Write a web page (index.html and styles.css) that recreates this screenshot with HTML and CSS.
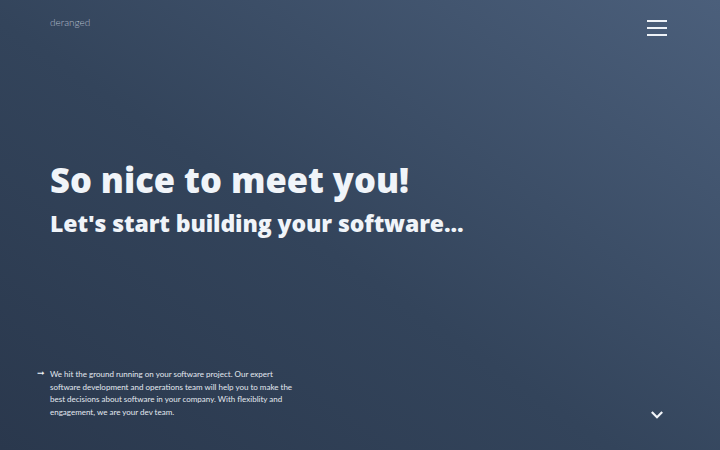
FILE: index.html
```html
<!DOCTYPE html>
<html lang="en">
<head>
<meta charset="utf-8">
<title>deranged</title>
<link rel="stylesheet" href="styles.css">
</head>
<body>
<div class="page">
  <header class="topbar">
    <div class="logo">deranged</div>
    <button class="menu" aria-label="Menu">
      <span class="bar"></span><span class="bar"></span><span class="bar"></span>
    </button>
  </header>
  <main class="hero">
    <h1 class="title">So nice to meet you!</h1>
    <h2 class="subtitle">Let's start building your software...</h2>
  </main>
  <footer class="bottom">
    <div class="intro">
      <span class="arrow">&#10142;</span>
      <p class="text">We hit the ground running on your software project. Our expert software development and operations team will help you to make the best decisions about software in your company. With flexiblity and engagement, we are your dev team.</p>
    </div>
    <svg class="chevron" width="14" height="10" viewBox="0 0 14 10"><path d="M1.8 2 L7 7.2 L12.2 2" fill="none" stroke="#f2f5f9" stroke-width="2.2"/></svg>
  </footer>
</div>
</body>
</html>
```
FILE: styles.css
```css
html, body { margin: 0; padding: 0; }
body {
  font-family: "Lato", "Noto Sans", sans-serif;
  color: #eef2f7;
}
.page {
  width: 720px;
  height: 450px;
  box-sizing: border-box;
  background: linear-gradient(35deg, #2a384d 0%, #33445b 45%, #4b5f7b 100%);
  display: flex;
  flex-direction: column;
  padding: 0 53px 0 50px;
  overflow: hidden;
}
.topbar {
  display: flex;
  justify-content: space-between;
  align-items: flex-start;
  padding-top: 15px;
  height: 60px;
  box-sizing: border-box;
}
.logo {
  font-size: 10px;
  font-weight: 300;
  color: #b3bdca;
  line-height: 14px;
}
.menu {
  background: none;
  border: 0;
  padding: 0;
  margin-top: 5px;
  width: 20px;
  display: flex;
  flex-direction: column;
  gap: 5px;
  cursor: pointer;
}
.bar {
  display: block;
  width: 20px;
  height: 2px;
  background: #eef2f7;
}
.hero {
  padding-top: 99px;
  flex: 1;
  font-family: "Open Sans", "Noto Sans", sans-serif;
  color: #f0f4f9;
}
.title {
  margin: 0;
  font-size: 34.5px;
  font-weight: 800;
  line-height: 42px;
  letter-spacing: 0;
}
.subtitle {
  margin: 6px 0 0;
  font-size: 23px;
  font-weight: 800;
  line-height: 32px;
  letter-spacing: -0.1px;
}
.bottom {
  display: flex;
  justify-content: space-between;
  align-items: flex-end;
  padding-bottom: 30px;
}
.intro {
  position: relative;
  width: 246px;
}
.arrow {
  position: absolute;
  left: -13px;
  top: -3px;
  font-size: 9px;
  line-height: 12.5px;
}
.text {
  margin: 0;
  font-size: 8px;
  line-height: 12.5px;
  color: #e3e9f0;
  position: relative;
  top: -2px;
}
.chevron {
  margin-right: 3px;
}
```
